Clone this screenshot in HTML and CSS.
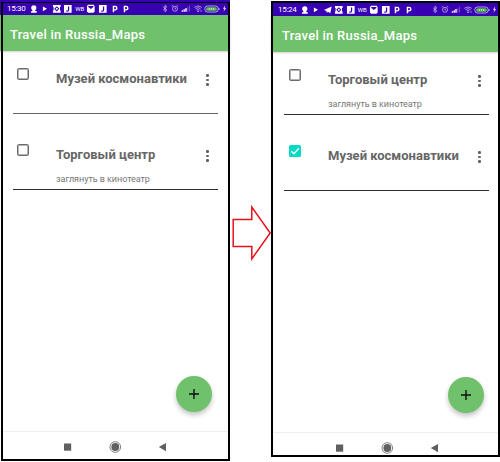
FILE: index.html
```
<!DOCTYPE html>
<html lang="ru">
<head>
<meta charset="utf-8">
<title>Travel in Russia_Maps</title>
<link rel="stylesheet" href="styles.css">
</head>
<body>
<svg class="defs" aria-hidden="true">
  <symbol id="ghost" viewBox="0 0 10 10"><circle cx="5" cy="4" r="2.700"/><path d="M3.500 6h3v1.400H8V9H2V7.600h1.500z"/></symbol>
  <symbol id="play" viewBox="0 0 10 10"><path d="M3 2.700 7.300 5 3 7.500z"/></symbol>
  <symbol id="plane" viewBox="0 0 10 10"><path d="M1 5.200 9 1.500 7.600 8.600 5.100 7 4 8.400 3.600 6.200z"/></symbol>
  <symbol id="tile" viewBox="0 0 10 10"><path d="M1 1h8v8H1z"/><path d="m5 2.300 2.700 2.700L5 7.700 2.300 5z" class="ink"/><circle cx="5" cy="5" r="1.100"/><path d="M1 3.200v3.600M9 3.200v3.600" class="inkline"/></symbol>
  <symbol id="jay" viewBox="0 0 10 10"><path d="M1 1h8v8H1z"/><path d="M5.800 2.500v3.700q0 1.200-1.400 1.200h-1" class="inkline"/></symbol>
  <symbol id="mail" viewBox="0 0 10 10"><path d="M2 .8h6L9 2.500v5L7.800 9H2.200L1 7.500v-5z"/><path d="M2.300 2.200h5.400v1L5 5.200 2.300 3.200z" class="ink"/></symbol>
  <symbol id="pee" viewBox="0 0 10 10"><path d="M3.600 8.500V2.500h1.700a1.700 1.700 0 0 1 0 3.600H3.600" class="thick"/></symbol>
  <symbol id="bt" viewBox="0 0 10 10"><path d="m3 3.200 4 3.500L5 8.600V1.400l2 1.900-4 3.500" class="line"/></symbol>
  <symbol id="alarm" viewBox="0 0 10 10"><circle cx="5" cy="5.300" r="2.800" class="line"/><path d="M5 3.800v1.700h1.300M1.400 2.600 3 1.300M8.600 2.600 7 1.300" class="line"/></symbol>
  <symbol id="signal" viewBox="0 0 10 10"><path d="M1 8.500V7M3 8.500V5.800M5 8.500V4.500" class="thick"/><path d="M7 8.500V3M9 8.500V1.500" class="line dim"/></symbol>
  <symbol id="wifi" viewBox="0 0 10 10"><path d="M.8 3.700q4.200-3.200 8.400 0M2.200 5.200q2.800-2.200 5.600 0M3.500 6.700q1.500-1 3 0" class="line"/><circle cx="5" cy="8" r=".8"/><path d="M7.500 6.400v2.400M9 6.400v2.400" class="line dim"/></symbol>
  <symbol id="battery" viewBox="0 0 16 8"><rect x=".8" y="1" width="13.400" height="6" rx="2.800" class="line"/><rect x="2.200" y="2.300" width="10.600" height="3.400" rx="1.500" class="charge"/><path d="M5.500 3v2M7.500 3v2M9.500 3v2M15 3v2" class="line"/></symbol>
  <symbol id="bolt" viewBox="0 0 6 10"><path d="M3.800 1.500 1.200 5.400h1.500L2 8.600 4.900 4.500H3.300z"/></symbol>
</svg>

<main class="compare">
  <section class="phone">
    <div class="status">
      <span class="time">15:30</span>
      <div class="apps">
        <svg><use href="#ghost"/></svg><svg><use href="#play"/></svg><svg><use href="#tile"/></svg><svg><use href="#jay"/></svg><span class="wb">WB</span><svg><use href="#mail"/></svg><svg><use href="#jay"/></svg><svg><use href="#pee"/></svg><svg><use href="#pee"/></svg>
      </div>
      <div class="system">
        <svg><use href="#bt"/></svg><svg><use href="#alarm"/></svg><svg class="wide"><use href="#signal"/></svg><svg class="wide"><use href="#wifi"/></svg><svg class="battery"><use href="#battery"/></svg><svg class="bolt"><use href="#bolt"/></svg>
      </div>
    </div>
    <header class="bar"><h1>Travel in Russia_Maps</h1></header>
    <div class="list">
      <article class="item soft">
        <span class="check"></span>
        <div class="text"><h2>Музей космонавтики</h2></div>
        <span class="more"><i></i><i></i><i></i></span>
      </article>
      <article class="item">
        <span class="check"></span>
        <div class="text"><h2>Торговый центр</h2><p>заглянуть в кинотеатр</p></div>
        <span class="more"><i></i><i></i><i></i></span>
      </article>
    </div>
    <div class="fab"><svg viewBox="0 0 12 12"><path d="M6 1v10M1 6h10"/></svg></div>
    <nav class="nav">
      <svg viewBox="0 0 104 14"><path d="M1 3.500h7.200v7.200H1z"/><circle cx="52.300" cy="7" r="5.300" class="ring"/><circle cx="52.300" cy="7" r="3.900"/><path d="M95.800 7.100 103 3v8.200z"/></svg>
    </nav>
  </section>

  <svg class="arrow" viewBox="0 0 40 56"><path d="M2.200 14.500H20.800V2L39.200 28 20.800 54V41.500H2.200z"/></svg>

  <section class="phone second">
    <div class="status">
      <span class="time">15:24</span>
      <div class="apps">
        <svg><use href="#ghost"/></svg><svg><use href="#play"/></svg><svg><use href="#plane"/></svg><svg><use href="#tile"/></svg><svg><use href="#jay"/></svg><span class="wb">WB</span><svg><use href="#mail"/></svg><svg><use href="#jay"/></svg><svg><use href="#pee"/></svg><svg><use href="#pee"/></svg>
      </div>
      <div class="system">
        <svg><use href="#bt"/></svg><svg><use href="#alarm"/></svg><svg class="wide"><use href="#signal"/></svg><svg class="wide"><use href="#wifi"/></svg><svg class="battery"><use href="#battery"/></svg><svg class="bolt"><use href="#bolt"/></svg>
      </div>
    </div>
    <header class="bar"><h1>Travel in Russia_Maps</h1></header>
    <div class="list">
      <article class="item">
        <span class="check"></span>
        <div class="text"><h2>Торговый центр</h2><p>заглянуть в кинотеатр</p></div>
        <span class="more"><i></i><i></i><i></i></span>
      </article>
      <article class="item">
        <span class="check checked"><svg viewBox="0 0 12 12"><path d="m2.300 6.200 2.600 2.500 5-5.400"/></svg></span>
        <div class="text"><h2>Музей космонавтики</h2></div>
        <span class="more"><i></i><i></i><i></i></span>
      </article>
    </div>
    <div class="fab"><svg viewBox="0 0 12 12"><path d="M6 1v10M1 6h10"/></svg></div>
    <nav class="nav">
      <svg viewBox="0 0 104 14"><path d="M1 3.500h7.200v7.200H1z"/><circle cx="52.300" cy="7" r="5.300" class="ring"/><circle cx="52.300" cy="7" r="3.900"/><path d="M95.800 7.100 103 3v8.200z"/></svg>
    </nav>
  </section>
</main>
</body>
</html>
```

FILE: styles.css
```
* { box-sizing: border-box; }
body { margin: 0; background: #fff; font-family: Roboto, "Liberation Sans", sans-serif; overflow: hidden; }
h1, h2, p { margin: 0; }
svg { display: block; }
.defs { position: absolute; width: 0; height: 0; }

.compare { display: grid; grid-template-columns: 231px 40px 229px; height: 462px; }

.phone { position: relative; display: flex; flex-direction: column; height: 461px; width: 230px; }
.phone::after { content: ""; position: absolute; inset: 2px 0 0 1px; border: 2px solid #000; border-top-width: 1px; }
.second { width: 229px; height: 457px; padding-top: 1px; }
.second::after { inset: 1px 0 0 0; border-top-width: 2px; }

.status { display: flex; align-items: center; height: 15px; flex: none; padding: 2px 2px 0 7px; background: #3700b3; color: #fff; }
.time { width: 20.500px; font-size: 8px; line-height: 10px; letter-spacing: -.3px; white-space: nowrap; }
.apps { display: flex; align-items: center; fill: #fff; }
.apps svg { width: 9.600px; height: 9.600px; margin: 0 1px; }
.wb { width: 11.600px; text-align: center; font-size: 6px; line-height: 10px; }
.system { display: flex; align-items: center; margin-left: auto; fill: #d8ccf2; }
.system svg { width: 10px; height: 9px; }
.system .wide { width: 12px; }
.system .battery { width: 16px; height: 8px; }
.system .bolt { width: 7px; margin-left: 1px; }
.ink { fill: #3700b3; }
.inkline { fill: none; stroke: #3700b3; stroke-width: 1.300; }
.line { fill: none; stroke: #d8ccf2; stroke-width: .8; }
.thick { fill: none; stroke: #fff; stroke-width: 1.500; }
.dim { opacity: .5; }
.charge { fill: #4bc93b; }

.bar { height: 36px; flex: none; display: flex; align-items: center; padding: 3px 0 0 10px; background: #6fc16b; color: #fff; box-shadow: 0 1px 2px rgba(0,0,0,.18); }
.second .bar { padding-left: 11px; }
.bar h1 { font-size: 13px; line-height: 16px; font-weight: 500; letter-spacing: .26px; white-space: nowrap; }

.list { flex: 1; display: flex; flex-direction: column; gap: 22px; padding: 9px 12px 0 13px; }
.second .list { padding-right: 11px; }
.item { display: flex; height: 54px; border-bottom: 1px solid #2e2e2e; color: #666; }
.soft { border-bottom-color: #666; }
.check { width: 12px; height: 12px; margin: 8px 0 0 4px; border: 1px solid #6b6b6b; box-shadow: inset 0 0 0 .5px #6b6b6b; border-radius: 1.500px; flex: none; }
.second .check { margin: 7.500px 0 0 5px; }
.check.checked { border: 0; background: #03dac5; box-shadow: none; }
.checked path { fill: none; stroke: #fff; stroke-width: 1.300; }
.text { margin-left: 27px; flex: 1; }
.text h2 { padding-top: 10.500px; font-size: 13px; line-height: 16px; font-weight: 700; white-space: nowrap; }
.text p { margin-top: 11.500px; font-size: 9px; line-height: 11px; letter-spacing: -.04px; color: #777; white-space: nowrap; }
.more { display: flex; flex-direction: column; gap: 2px; width: 3px; margin: 14px 9px 0 0; }
.second .more { margin-right: 8px; }
.more i { width: 2.700px; height: 2.700px; border-radius: 50%; background: #606060; }

.fab { align-self: flex-end; flex: none; display: grid; place-items: center; width: 36px; height: 36px; margin: 0 18px 19px 0; border-radius: 50%; background: #6fc16b; box-shadow: 0 3px 5px rgba(0,0,0,.24); }
.second .fab { margin-right: 16.500px; }
.fab svg { width: 12px; height: 12px; }
.fab path { stroke: #111; stroke-width: 1.400; }
.nav { height: 30px; flex: none; border-top: 1px solid #eee; padding: 8px 0 0 63px; fill: #606060; }
.second .nav { height: 25px; padding: 7.500px 0 0 63.500px; }
.nav svg { width: 104px; height: 14px; }
.ring { fill: none; stroke: #606060; stroke-width: .8; }
.arrow { width: 40px; height: 56px; margin-top: 205px; overflow: visible; fill: #fff; stroke: #e8121c; stroke-width: 1.500; }
```
